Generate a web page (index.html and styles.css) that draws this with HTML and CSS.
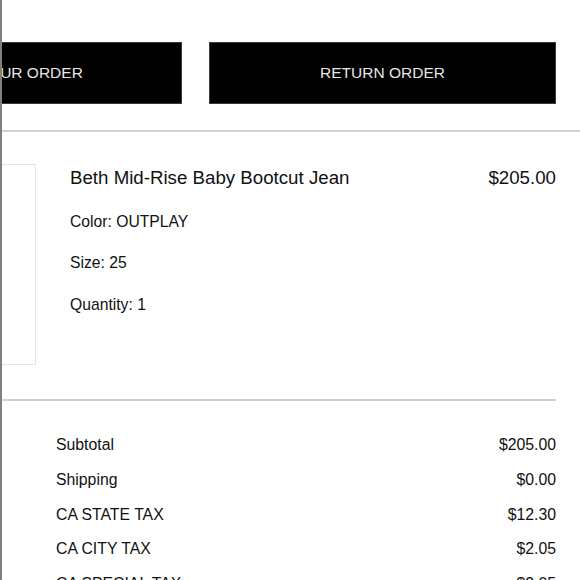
FILE: index.html
```html
<!DOCTYPE html>
<html lang="en">
<head>
<meta charset="utf-8">
<title>Order</title>
<link rel="stylesheet" href="styles.css">
</head>
<body>
<div class="page">
  <div class="content">
    <div class="actions">
      <a class="btn">VIEW YOUR ORDER</a>
      <a class="btn">RETURN ORDER</a>
    </div>
    <div class="rule rule-full"></div>
    <div class="item">
      <div class="thumb"></div>
      <div class="details">
        <div class="title-row">
          <span class="title">Beth Mid-Rise Baby Bootcut Jean</span>
          <span class="price">$205.00</span>
        </div>
        <div class="meta first">Color: OUTPLAY</div>
        <div class="meta">Size: 25</div>
        <div class="meta">Quantity: 1</div>
      </div>
    </div>
    <div class="rule"></div>
    <div class="summary">
      <div class="row"><span>Subtotal</span><span>$205.00</span></div>
      <div class="row"><span>Shipping</span><span>$0.00</span></div>
      <div class="row"><span>CA STATE TAX</span><span>$12.30</span></div>
      <div class="row"><span>CA CITY TAX</span><span>$2.05</span></div>
      <div class="row"><span>CA SPECIAL TAX</span><span>$2.05</span></div>
    </div>
  </div>
</div>
</body>
</html>
```

FILE: styles.css
```css
html, body {
  margin: 0;
  padding: 0;
  background: #fff;
}
body {
  font-family: "Liberation Sans", Arial, Helvetica, sans-serif;
  color: #111;
}
.page {
  height: 580px;
  overflow: hidden;
  border-left: 2px solid #808080;
}
.content {
  margin-left: -167px;
  width: 721px;
}
.actions {
  display: grid;
  grid-template-columns: 1fr 1fr;
  column-gap: 27px;
  padding-top: 42px;
}
.btn {
  display: flex;
  align-items: center;
  justify-content: center;
  height: 62px;
  background: #000;
  color: #e6e6e6;
  font-size: 15.5px;
  box-sizing: border-box;
  border: 1px solid #3a3a3a;
}
.rule {
  height: 2px;
  background: #d2d2d2;
}
.rule-full {
  margin-top: 26px;
  width: calc(100% + 24px);
}
.item {
  display: flex;
  margin-top: 32px;
  margin-bottom: 34px;
}
.thumb {
  width: 201px;
  height: 201px;
  box-sizing: border-box;
  border: 1px solid #e4e4e4;
  flex: none;
}
.details {
  flex: 1;
  margin-left: 34px;
  padding-top: 3px;
}
.title-row {
  display: flex;
  justify-content: space-between;
  font-size: 18.7px;
  line-height: 22px;
}
.meta {
  font-size: 15.7px;
  line-height: 20px;
  margin-top: 21.4px;
}
.meta.first {
  margin-top: 23px;
}
.summary {
  padding-top: 27px;
  padding-left: 221px;
}
.row {
  display: flex;
  justify-content: space-between;
  font-size: 15.8px;
  line-height: 34.8px;
}
```
